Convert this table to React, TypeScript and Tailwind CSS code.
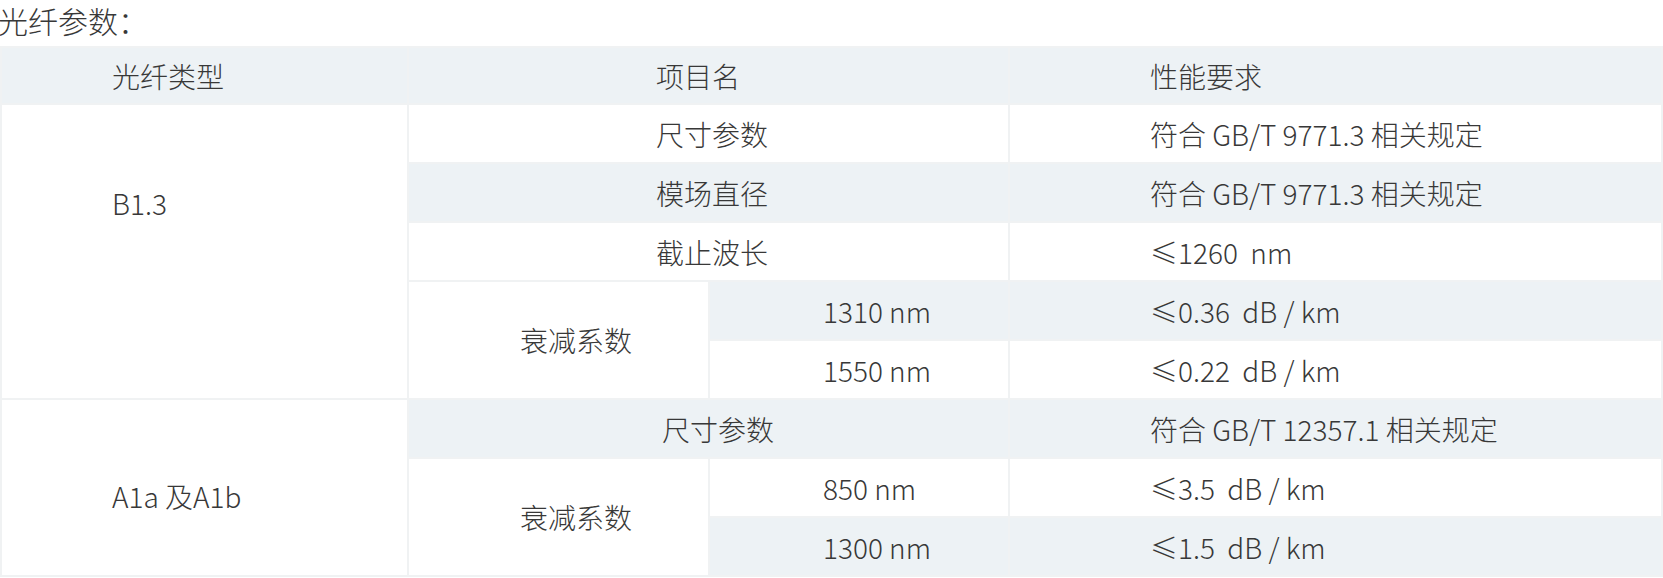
const cell = 'border-2 border-[#f0f2f3] text-[28px] leading-10 text-[#383838] font-light whitespace-pre align-middle text-left'
const stripe = 'bg-[#edf2f5]'

function Td({
  children,
  className = '',
  rowSpan,
  colSpan,
}: {
  children?: React.ReactNode
  className?: string
  rowSpan?: number
  colSpan?: number
}) {
  return (
    <td rowSpan={rowSpan} colSpan={colSpan} className={`${cell} ${className}`}>
      {children}
    </td>
  )
}

export default function App() {
  return (
    <div
      className="w-[1663px] h-[578px] overflow-hidden bg-white"
      style={{ fontFamily: '"Noto Sans CJK SC", "Noto Sans", sans-serif' }}
    >
      <div className="h-[46px] -ml-[2px] text-[30px] leading-10 text-[#383838] font-light">光纤参数：</div>
      <table className="w-[1663px] table-fixed border-collapse">
        <colgroup>
          <col className="w-[407px]" />
          <col className="w-[301px]" />
          <col className="w-[300px]" />
          <col />
        </colgroup>
        <tbody>
          <tr className="h-[57px]">
            <Td className={`${stripe} pl-[110px]`}>光纤类型</Td>
            <Td colSpan={2} className={`${stripe} pl-[247px]`}>项目名</Td>
            <Td className={`${stripe} pl-[140px]`}>性能要求</Td>
          </tr>
          <tr className="h-[59px]">
            <Td rowSpan={5} className="bg-white pl-[110px] !align-top pt-[78px]">B1.3</Td>
            <Td colSpan={2} className="pl-[247px]">尺寸参数</Td>
            <Td className="pl-[140px]">符合 GB/T 9771.3 相关规定</Td>
          </tr>
          <tr className="h-[59px]">
            <Td colSpan={2} className={`${stripe} pl-[247px]`}>模场直径</Td>
            <Td className={`${stripe} pl-[140px]`}>符合 GB/T 9771.3 相关规定</Td>
          </tr>
          <tr className="h-[59px]">
            <Td colSpan={2} className="pl-[247px]">截止波长</Td>
            <Td className="pl-[140px]">≤1260  nm</Td>
          </tr>
          <tr className="h-[59px]">
            <Td rowSpan={2} className="bg-white pl-[111px]">衰减系数</Td>
            <Td className={`${stripe} pl-[113px]`}>1310 nm</Td>
            <Td className={`${stripe} pl-[140px]`}>≤0.36  dB / km</Td>
          </tr>
          <tr className="h-[59px]">
            <Td className="pl-[113px]">1550 nm</Td>
            <Td className="pl-[140px]">≤0.22  dB / km</Td>
          </tr>
          <tr className="h-[59px]">
            <Td rowSpan={3} className="bg-white pl-[110px] !align-top pt-[76px]">A1a 及A1b</Td>
            <Td colSpan={2} className={`${stripe} pl-[253px]`}>尺寸参数</Td>
            <Td className={`${stripe} pl-[140px]`}>符合 GB/T 12357.1 相关规定</Td>
          </tr>
          <tr className="h-[59px]">
            <Td rowSpan={2} className="bg-white pl-[111px]">衰减系数</Td>
            <Td className="pl-[113px]">850 nm</Td>
            <Td className="pl-[140px]">≤3.5  dB / km</Td>
          </tr>
          <tr className="h-[59px]">
            <Td className={`${stripe} pl-[113px]`}>1300 nm</Td>
            <Td className={`${stripe} pl-[140px]`}>≤1.5  dB / km</Td>
          </tr>
        </tbody>
      </table>
    </div>
  )
}
